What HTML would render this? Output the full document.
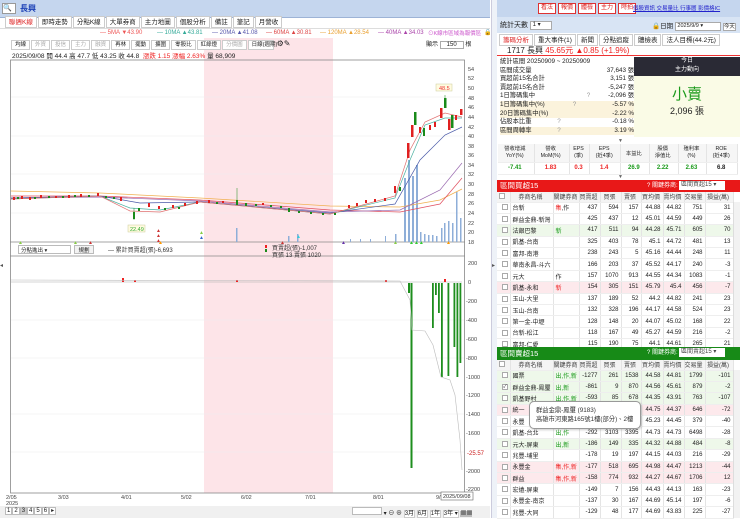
<!DOCTYPE html>
<html><head><meta charset="utf-8">
<style>
*{margin:0;padding:0;box-sizing:border-box}
body{width:740px;height:518px;overflow:hidden;background:#fff;font-family:"Liberation Sans","Noto Sans CJK TC",sans-serif;font-size:7px;color:#222;position:relative}
.a{position:absolute}
.tab{display:inline-block;border:1px solid #ccc;background:#fff;padding:1px 3px;margin-right:1px;font-size:6.5px;height:12px;line-height:9px}
.btn{display:inline-block;border:1px solid #d33;color:#d22;background:#fff;padding:0 2px;font-size:6px;height:11px;line-height:9px;margin-right:2px}
table{border-collapse:collapse;font-size:6px}
td{border-right:1px solid #e4e4e4;border-bottom:1px solid #eee;height:11.4px;text-align:right;padding-right:2px;white-space:nowrap;overflow:hidden}
td.l{text-align:left;padding-left:2px}
tr.h td{background:#f4f4f4;text-align:center;color:#444;height:10px}
.g{background:#eef8ea}.p{background:#fde9ec}
.r{color:#e22}.gr{color:#1a9a1a}
.cb{display:inline-block;width:6px;height:6px;border:1px solid #aaa;background:#fff;vertical-align:middle}
.ma{position:absolute;top:30px;font-size:6px;white-space:nowrap}
</style></head><body>

<div class="a" style="left:0;top:0;width:490px;height:18px;background:#c5d6ee;border-bottom:1px solid #9db3d6"></div>
<div class="a" style="left:2px;top:3px;width:14px;height:11px;background:#fff;border:1px solid #999;font-size:7px;line-height:9px">🔍</div>
<div class="a" style="left:20px;top:3px;font-size:8px;color:#1a3fb5;font-weight:bold">長興</div>

<div class="a" style="left:5px;top:16px;white-space:nowrap">
<span class="tab" style="color:#d22">聯週K線</span><span class="tab">即時走勢</span><span class="tab">分點K線</span><span class="tab">大單券商</span><span class="tab">主力地圖</span><span class="tab">個股分析</span><span class="tab">備註</span><span class="tab">筆記</span><span class="tab">月營收</span>
</div>
<div class="a" style="left:0;top:28px;width:490px;height:1px;background:#ddd"></div>
<span class="ma" style="left:100px;color:#e55">— 5MA ▼43.90</span>
<span class="ma" style="left:157px;color:#3a9">— 10MA ▲43.81</span>
<span class="ma" style="left:212px;color:#55a">— 20MA ▲41.08</span>
<span class="ma" style="left:266px;color:#d44">— 60MA ▲30.81</span>
<span class="ma" style="left:320px;color:#e9a030">— 120MA ▲28.54</span>
<span class="ma" style="left:378px;color:#a4a">— 40MA ▲34.03</span>
<div class="a" style="left:428px;top:29px;font-size:5.5px;color:#c5c;white-space:nowrap">⊙K線市區域為報價區</div>
<div class="a" style="left:484px;top:29px;font-size:6px">🔒</div>

<div class="a" style="left:204px;top:38px;width:129px;height:455px;background:#fde4e8"></div>

<div class="a" style="left:11px;top:39px;white-space:nowrap">
<span class="tab" style="height:10px;font-size:5.5px;line-height:7px">均線</span><span class="tab" style="height:10px;font-size:5.5px;line-height:7px;color:#aaa">外資</span><span class="tab" style="height:10px;font-size:5.5px;line-height:7px;color:#aaa">投信</span><span class="tab" style="height:10px;font-size:5.5px;line-height:7px;color:#aaa">主力</span><span class="tab" style="height:10px;font-size:5.5px;line-height:7px;color:#aaa">融資</span><span class="tab" style="height:10px;font-size:5.5px;line-height:7px">再林</span><span class="tab" style="height:10px;font-size:5.5px;line-height:7px">擺動</span><span class="tab" style="height:10px;font-size:5.5px;line-height:7px">擴圍</span><span class="tab" style="height:10px;font-size:5.5px;line-height:7px">零股比</span><span class="tab" style="height:10px;font-size:5.5px;line-height:7px">紅綠燈</span><span class="tab" style="height:10px;font-size:5.5px;line-height:7px;color:#aaa">分價圖</span><span class="tab" style="height:10px;font-size:5.5px;line-height:7px;width:26px">日線(週期)</span> <span style="font-size:8px">⚙✎</span>
</div>
<div class="a" style="left:12px;top:50px;font-size:6.5px;white-space:nowrap">2025/09/08 開 44.4 高 47.7 低 43.25 收 44.8 &nbsp;<span class="r">漲跌 1.15 漲幅 2.63%</span> 量 68,909</div>
<div class="a" style="left:426px;top:39px;font-size:6px;white-space:nowrap">顯示 <span style="border:1px solid #aaa;padding:0 6px">150</span> 根</div>

<svg class="a" style="left:0;top:0" width="495" height="518">
<g stroke="#888" fill="none" stroke-width="0.8">
<rect x="10.5" y="60" width="454" height="433"/>
<line x1="10" y1="242" x2="465" y2="242"/>
<line x1="10" y1="256" x2="465" y2="256"/>
</g>
<g stroke="#eee" stroke-width="0.6">
<line x1="11" y1="97" x2="464" y2="97"/><line x1="11" y1="136" x2="464" y2="136"/><line x1="11" y1="174" x2="464" y2="174"/><line x1="11" y1="213" x2="464" y2="213"/>
<line x1="11" y1="320" x2="464" y2="320"/><line x1="11" y1="358" x2="464" y2="358"/><line x1="11" y1="414" x2="464" y2="414"/><line x1="11" y1="452" x2="464" y2="452"/>
</g>
<g fill="#444" font-size="5.5" font-family="Liberation Sans">
<text x="468" y="71">54</text><text x="468" y="80">52</text><text x="468" y="90">50</text><text x="468" y="100">48</text><text x="468" y="109">46</text><text x="468" y="119">44</text><text x="468" y="129">42</text><text x="468" y="138">40</text><text x="468" y="148">38</text><text x="468" y="157">36</text><text x="468" y="167">34</text><text x="468" y="176">32</text><text x="468" y="186">30</text><text x="468" y="196">28</text><text x="468" y="205">26</text><text x="468" y="215">24</text><text x="468" y="225">22</text><text x="468" y="234">20</text><text x="468" y="244">18</text>
<text x="468" y="265">200</text><text x="468" y="284">0</text><text x="466" y="303">-200</text><text x="466" y="322">-400</text><text x="466" y="341">-600</text><text x="466" y="360">-800</text><text x="466" y="379">-1000</text><text x="466" y="397">-1200</text><text x="466" y="416">-1400</text><text x="466" y="435">-1600</text><text x="466" y="473">-2000</text><text x="466" y="491">-2200</text>
<text x="467" y="455" fill="#c22" font-size="6">-25.57</text>
<text x="6" y="499">2/05</text><text x="6" y="505">2025</text><text x="58" y="499">3/03</text><text x="121" y="499">4/01</text><text x="181" y="499">5/02</text><text x="241" y="499">6/02</text><text x="305" y="499">7/01</text><text x="373" y="499">8/01</text><text x="436" y="499">9/</text>
</g>
<rect x="441" y="492" width="32" height="8" fill="#fff" stroke="#666" stroke-width="0.6"/>
<text x="443" y="498" font-size="5.5" fill="#333">2025/09/08</text>
<g fill="#8eaed8">
<rect x="236" y="228" width="1.5" height="14"/><rect x="288" y="236" width="1.5" height="6"/><rect x="297" y="234" width="1.5" height="8"/>
<rect x="350" y="239" width="1" height="3"/><rect x="360" y="239" width="1" height="3"/><rect x="370" y="239" width="1" height="3"/><rect x="385" y="236" width="1" height="6"/><rect x="395" y="234" width="1.5" height="8"/>
<rect x="404" y="178" width="2" height="64"/><rect x="408" y="160" width="2" height="82"/><rect x="412" y="176" width="2" height="66"/><rect x="416" y="165" width="2" height="77"/><rect x="420" y="232" width="1.5" height="10"/><rect x="424" y="234" width="1.5" height="8"/><rect x="428" y="235" width="1.5" height="7"/><rect x="432" y="235" width="1.5" height="7"/><rect x="436" y="236" width="1.5" height="6"/><rect x="441" y="228" width="1.5" height="14"/><rect x="444" y="223" width="1.5" height="19"/><rect x="448" y="221" width="1.5" height="21"/><rect x="452" y="223" width="1.5" height="19"/><rect x="456" y="192" width="1.5" height="50"/><rect x="460" y="218" width="1.5" height="24"/>
</g>
<g fill="none" stroke-width="0.7">
<polyline stroke="#f0b050" points="11,191 100,193 200,198 330,206 400,207 440,200 462,189"/>
<polyline stroke="#e05060" points="11,196 100,196 200,200 330,210 400,212 440,204 462,178"/>
<polyline stroke="#9a6ab0" points="11,198 100,197 200,201 330,212 400,210 440,190 462,163"/>
<polyline stroke="#4a5aa8" points="11,198 100,196 140,203 200,202 330,213 395,204 420,160 445,135 462,127"/>
<polyline stroke="#4ab0a0" points="11,199 100,196 130,208 160,210 200,202 330,214 395,198 410,160 425,125 445,118 462,118"/>
<polyline stroke="#e07070" points="11,199 100,196 130,211 160,212 200,202 330,214 395,196 410,150 425,122 445,113 462,117"/>
</g>
<g>
<g fill="#e02020">
<rect x="13" y="197" width="2" height="3"/><rect x="21" y="196" width="2" height="3"/><rect x="29" y="197" width="2" height="3"/><rect x="40" y="195" width="2" height="3"/><rect x="55" y="196" width="2" height="2"/><rect x="68" y="195" width="2" height="3"/><rect x="80" y="194" width="2" height="3"/><rect x="97" y="193" width="2" height="3"/><rect x="120" y="197" width="2" height="4"/>
<rect x="148" y="203" width="2" height="4"/><rect x="158" y="206" width="2" height="3"/><rect x="172" y="205" width="2" height="3"/><rect x="184" y="203" width="2" height="3"/><rect x="196" y="201" width="2" height="3"/><rect x="208" y="200" width="2" height="3"/><rect x="222" y="201" width="2" height="2"/><rect x="262" y="203" width="2" height="2"/>
<rect x="348" y="205" width="2" height="3"/><rect x="356" y="203" width="2" height="3"/><rect x="365" y="200" width="2" height="3"/><rect x="374" y="199" width="2" height="3"/><rect x="384" y="198" width="2" height="3"/><rect x="394" y="186" width="2" height="7"/>
<rect x="407" y="143" width="2.5" height="15"/><rect x="411" y="125" width="2.5" height="12"/><rect x="419" y="127" width="2" height="6"/><rect x="429" y="125" width="2" height="5"/><rect x="434" y="122" width="2" height="5"/><rect x="440" y="108" width="2.5" height="10"/><rect x="448" y="119" width="2.5" height="11"/><rect x="455" y="115" width="2" height="5"/><rect x="460" y="109" width="2.5" height="6"/>
</g>
<g fill="#1a8a1a">
<rect x="17" y="197" width="2" height="2"/><rect x="34" y="197" width="2" height="2"/><rect x="48" y="196" width="2" height="2"/><rect x="62" y="196" width="2" height="2"/><rect x="74" y="195" width="2" height="2"/><rect x="88" y="195" width="2" height="2"/><rect x="105" y="196" width="2" height="2"/><rect x="113" y="197" width="2" height="2"/>
<rect x="133" y="212" width="2" height="7"/><rect x="138" y="208" width="2" height="3"/><rect x="164" y="208" width="2" height="2"/><rect x="178" y="207" width="2" height="2"/><rect x="216" y="202" width="2" height="2"/><rect x="236" y="200" width="2" height="5"/><rect x="245" y="203" width="2" height="3"/><rect x="255" y="204" width="2" height="2"/><rect x="270" y="205" width="2" height="2"/><rect x="280" y="206" width="2" height="2"/><rect x="288" y="208" width="2" height="4"/><rect x="298" y="211" width="2" height="2"/><rect x="310" y="212" width="2" height="2"/><rect x="322" y="213" width="2" height="2"/><rect x="334" y="213" width="2" height="2"/>
<rect x="399" y="187" width="2" height="4"/><rect x="414" y="112" width="2.5" height="13"/><rect x="423" y="128" width="2" height="8"/><rect x="444" y="98" width="2.5" height="10"/><rect x="451" y="115" width="2.5" height="13"/>
</g>
<g stroke="#1a8a1a" stroke-width="0.5"><line x1="237" y1="188" x2="237" y2="200"/><line x1="134" y1="208" x2="134" y2="220"/><line x1="445" y1="95" x2="445" y2="108"/></g>
</g>
<rect x="128" y="225" width="17" height="7" fill="#fffbe0" stroke="#cc9" stroke-width="0.5"/>
<text x="130" y="231" font-size="5.5" fill="#3a3">22.49</text>
<rect x="436" y="84" width="16" height="7" fill="#fffbe0" stroke="#cc9" stroke-width="0.5"/>
<text x="439" y="90" font-size="5.5" fill="#e33">48.5</text>
<g font-size="5">
<text x="18" y="244" fill="#8c4">▲</text><text x="73" y="244" fill="#8c4">▲</text><text x="88" y="244" fill="#c33">▲</text><text x="156" y="242" fill="#c33">▲</text><text x="156" y="237" fill="#c33">▲</text><text x="156" y="232" fill="#c33">▲</text><text x="158" y="244" fill="#f90">▲</text><text x="199" y="239" fill="#36c">▲</text><text x="199" y="234" fill="#8c4">▲</text><text x="280" y="244" fill="#c33">▲</text><text x="296" y="238" fill="#3cd">▲</text><text x="341" y="244" fill="#63a">▲</text><text x="393" y="244" fill="#8c4">▲</text><text x="409" y="244" fill="#3c3">▲▲▲</text><text x="446" y="244" fill="#f90">▲</text>
</g>
<line x1="11" y1="282" x2="462" y2="282" stroke="#aaa" stroke-width="0.6"/>
<g fill="#1e8e1e">
<rect x="408" y="283" width="2" height="10"/><rect x="410.5" y="283" width="2" height="185"/><rect x="432" y="283" width="1.8" height="45"/><rect x="435" y="283" width="1.8" height="12"/><rect x="438" y="283" width="1.8" height="30"/><rect x="441" y="283" width="1.8" height="94"/><rect x="447.5" y="283" width="1.8" height="93"/><rect x="453.5" y="283" width="1.8" height="64"/><rect x="456.5" y="283" width="1.8" height="94"/><rect x="459.5" y="283" width="1.8" height="80"/>
</g>
<g fill="#e22"><rect x="122" y="278" width="2" height="4"/><rect x="134" y="280" width="2" height="2"/><rect x="236" y="280" width="2" height="2"/><rect x="385" y="280" width="2" height="2"/><rect x="444" y="279" width="2" height="3"/></g>
<polyline fill="none" stroke="#bbb" stroke-width="0.6" points="11,280 400,281 410,300 412,330 425,331 433,345 441,377 450,380 455,395 460,440 462,470"/>
<text x="108" y="252" font-size="6" fill="#333">— 累計買賣超(張)-6,693</text>
<rect x="265" y="245" width="2" height="3" fill="#e22"/><rect x="265" y="249" width="2" height="3" fill="#1a8a1a"/>
<text x="272" y="250" font-size="6" fill="#333">買賣超(張)-1,007</text>
<text x="272" y="257" font-size="6" fill="#333">買張 13 賣張 1020</text>
</svg>
<div class="a" style="left:18px;top:245px;width:53px;height:9px;border:1px solid #bbb;background:#fff;font-size:5.5px;padding-left:2px">分點進出 ▾</div>
<div class="a" style="left:74px;top:245px;width:20px;height:9px;border:1px solid #bbb;background:#f3f3f3;font-size:5.5px;text-align:center">規劃</div>
<div class="a" style="left:0;top:506px;width:490px;height:12px;background:#f0f0f0"></div>
<div class="a" style="left:5px;top:507px;font-size:6px;white-space:nowrap">
<span style="border:1px solid #bbb;padding:0 1px;background:#fff">1</span><span style="border:1px solid #bbb;padding:0 1px;background:#fff">2</span><span style="border:1px solid #bbb;padding:0 1px;background:#ccc">3</span><span style="border:1px solid #bbb;padding:0 1px;background:#fff">4</span><span style="border:1px solid #bbb;padding:0 1px;background:#fff">5</span><span style="border:1px solid #bbb;padding:0 1px;background:#fff">6</span><span style="border:1px solid #bbb;padding:0 1px;background:#fff">▸</span></div>
<div class="a" style="left:352px;top:507px;font-size:6px;white-space:nowrap"><span style="display:inline-block;width:30px;height:8px;border:1px solid #bbb;background:#fff"></span> ▾ ⊖ ⊕ <span style="border:1px solid #ccc;background:#fff">3月</span> <span style="border:1px solid #ccc;background:#fff">6月</span> <span style="border:1px solid #ccc;background:#fff">1年</span> <span style="border:1px solid #ccc;background:#fff">3年 ▾</span> <span style="background:#bbb">▦▦</span></div>
<div class="a" style="left:491px;top:0;width:6px;height:518px;background:#eef2f8;border-left:1px solid #ccd"></div>
<div class="a" style="left:0;top:262px;font-size:6px;color:#555">◂</div>
<div class="a" style="left:492px;top:262px;font-size:6px;color:#555">▸</div>

<!-- right panel -->
<div class="a" style="left:497px;top:0;width:243px;height:17px;background:#c5d6ee"></div>
<div class="a" style="left:538px;top:3px;white-space:nowrap"><span class="btn">看法</span><span class="btn">報價</span><span class="btn">體檢</span><span class="btn">主力</span><span class="btn">時拍</span></div>
<div class="a" style="left:633px;top:4px;font-size:5.5px;color:#22c;text-decoration:underline;white-space:nowrap">個股資訊 交易量比 行事曆 影價格IC</div>
<div class="a" style="left:497px;top:17px;width:243px;height:16px;background:#d8e4f4"></div>
<div class="a" style="left:500px;top:20px;font-size:7px;white-space:nowrap">統計天數 <span style="display:inline-block;width:22px;height:9px;border:1px solid #aaa;background:#fff;font-size:6px;vertical-align:middle;line-height:7px">&nbsp;1 ▾</span></div>
<div class="a" style="left:652px;top:20px;font-size:6.5px;white-space:nowrap">🔒日期 <span style="display:inline-block;width:46px;height:9px;border:1px solid #aaa;background:#fff;font-size:5.5px;vertical-align:middle;line-height:7px">&nbsp;2025/9/9 ▾</span><span style="border:1px solid #aaa;background:#fff;font-size:5.5px;margin-left:2px">今天</span></div>
<div class="a" style="left:499px;top:34px;white-space:nowrap"><span class="tab" style="color:#d22">籌碼分析</span><span class="tab">重大事件(1)</span><span class="tab">新聞</span><span class="tab">分點追蹤</span><span class="tab">體檢表</span><span class="tab">法人目標(44.2元)</span></div>
<div class="a" style="left:497px;top:46px;width:243px;height:10px;border-bottom:1px solid #e33"></div>
<div class="a" style="left:507px;top:45px;font-size:8px;white-space:nowrap">1717 長興 <span class="r">45.65元 ▲0.85 (+1.9%)</span></div>
<div class="a" style="left:500px;top:58px;width:134px;font-size:6.3px;line-height:8.6px;white-space:nowrap">
<div>統計區間 20250909 ~ 20250909</div>
<div>區間成交量<span style="float:right">37,643 張</span></div>
<div>買超前15名合計<span style="float:right">3,151 張</span></div>
<div>賣超前15名合計<span style="float:right">-5,247 張</span></div>
<div>1日籌碼集中 <span style="margin-left:50px;color:#999">?</span><span style="float:right">-2,096 張</span></div>
<div style="background:#fbf3dc">1日籌碼集中(%)<span style="margin-left:28px;color:#999">?</span><span style="float:right">-5.57 %</span></div>
<div style="background:#fbf3dc">20日籌碼集中(%)<span style="float:right">-2.22 %</span></div>
<div>佔股本比重 <span style="margin-left:24px;color:#999">?</span><span style="float:right">-0.18 %</span></div>
<div style="background:#fbf3dc">區間周轉率 <span style="margin-left:24px;color:#999">?</span><span style="float:right">3.19 %</span></div>
</div>
<div class="a" style="left:634px;top:57px;width:106px;height:19px;background:#2a2a35;color:#fff;text-align:center;font-size:6px;line-height:9px">今日<br>主力動向</div>
<div class="a" style="left:634px;top:76px;width:106px;height:61px;background:#fafbe6;text-align:center">
<div style="font-size:15px;color:#1a9a1a;margin-top:7px">小賣</div>
<div style="font-size:9px;color:#222">2,096 張</div></div>
<div class="a" style="left:618px;top:138px;font-size:5px;color:#666">▼</div>
<table class="a" style="left:498px;top:144px;width:240px;font-size:5.3px">
<tr><td style="text-align:center;height:18px;background:#f6f6f6;line-height:7px">營收增減<br>YoY(%)</td><td style="text-align:center;background:#f6f6f6;line-height:7px">營收<br>MoM(%)</td><td style="text-align:center;background:#f6f6f6;line-height:7px">EPS<br>(季)</td><td style="text-align:center;background:#f6f6f6;line-height:7px">EPS<br>(近4季)</td><td style="text-align:center;background:#f6f6f6">本益比</td><td style="text-align:center;background:#f6f6f6;line-height:7px">股價<br>淨值比</td><td style="text-align:center;background:#f6f6f6;line-height:7px">殖利率<br>(%)</td><td style="text-align:center;background:#f6f6f6;line-height:7px">ROE<br>(近4季)</td></tr>
<tr style="font-weight:bold;font-size:6px"><td class="gr" style="text-align:center;height:12px">-7.41</td><td class="r" style="text-align:center">1.83</td><td class="r" style="text-align:center">0.3</td><td class="r" style="text-align:center">1.4</td><td class="gr" style="text-align:center">26.9</td><td class="gr" style="text-align:center">2.22</td><td class="gr" style="text-align:center">2.63</td><td style="text-align:center">6.8</td></tr>
</table>
<div class="a" style="left:618px;top:174px;font-size:5px;color:#666">▼</div>

<div class="a" style="left:497px;top:180px;width:243px;height:12px;background:#e81818;color:#fff;font-size:7.5px;padding-left:3px;line-height:12px;white-space:nowrap">區間買超15<span style="position:absolute;left:150px;font-size:6px">? 關鍵券商: <span style="display:inline-block;width:46px;height:9px;background:#fff;color:#444;vertical-align:middle;line-height:9px">&nbsp;區間買超15 ▾</span></span></div>
<table class="a" style="left:497px;top:192px;width:236px;table-layout:fixed">
<colgroup><col style="width:13px"><col style="width:43px"><col style="width:26px"><col style="width:21px"><col style="width:21px"><col style="width:20px"><col style="width:22px"><col style="width:21px"><col style="width:21px"><col style="width:28px"></colgroup>
<tr class="h"><td><span class="cb"></span></td><td>券商名稱</td><td>關鍵券商</td><td>買賣超</td><td>買張</td><td>賣張</td><td>買均價</td><td>賣均價</td><td>交易量</td><td>損益(萬)</td></tr>
<tr><td><span class="cb"></span></td><td class="l">台新</td><td class="l"><span class="r">集</span>,作</td><td>437</td><td>594</td><td>157</td><td>44.88</td><td>44.82</td><td>751</td><td>31</td></tr>
<tr><td><span class="cb"></span></td><td class="l">群益金鼎-新灣</td><td></td><td>425</td><td>437</td><td>12</td><td>45.01</td><td>44.59</td><td>449</td><td>26</td></tr>
<tr class="g"><td><span class="cb"></span></td><td class="l">法銀巴黎</td><td class="l gr">新</td><td>417</td><td>511</td><td>94</td><td>44.28</td><td>45.71</td><td>605</td><td>70</td></tr>
<tr><td><span class="cb"></span></td><td class="l">凱基-台南</td><td></td><td>325</td><td>403</td><td>78</td><td>45.1</td><td>44.72</td><td>481</td><td>13</td></tr>
<tr><td><span class="cb"></span></td><td class="l">富邦-南港</td><td></td><td>238</td><td>243</td><td>5</td><td>45.16</td><td>44.44</td><td>248</td><td>11</td></tr>
<tr><td><span class="cb"></span></td><td class="l">華南永昌-斗六</td><td></td><td>166</td><td>203</td><td>37</td><td>45.52</td><td>44.17</td><td>240</td><td>-3</td></tr>
<tr><td><span class="cb"></span></td><td class="l">元大</td><td class="l">作</td><td>157</td><td>1070</td><td>913</td><td>44.55</td><td>44.34</td><td>1083</td><td>-1</td></tr>
<tr class="p"><td><span class="cb"></span></td><td class="l">凱基-永和</td><td class="l r">新</td><td>154</td><td>305</td><td>151</td><td>45.79</td><td>45.4</td><td>456</td><td>-7</td></tr>
<tr><td><span class="cb"></span></td><td class="l">玉山-大里</td><td></td><td>137</td><td>189</td><td>52</td><td>44.2</td><td>44.82</td><td>241</td><td>23</td></tr>
<tr><td><span class="cb"></span></td><td class="l">玉山-台南</td><td></td><td>132</td><td>328</td><td>196</td><td>44.17</td><td>44.58</td><td>524</td><td>23</td></tr>
<tr><td><span class="cb"></span></td><td class="l">第一金-中壢</td><td></td><td>128</td><td>148</td><td>20</td><td>44.07</td><td>45.02</td><td>168</td><td>22</td></tr>
<tr><td><span class="cb"></span></td><td class="l">台新-松江</td><td></td><td>118</td><td>167</td><td>49</td><td>45.27</td><td>44.59</td><td>216</td><td>-2</td></tr>
<tr><td><span class="cb"></span></td><td class="l">富邦-仁愛</td><td></td><td>115</td><td>190</td><td>75</td><td>44.1</td><td>44.61</td><td>265</td><td>21</td></tr>
</table>
<div class="a" style="left:733px;top:202px;width:7px;height:145px;background:#f2f2f2;border-left:1px solid #ddd"></div>

<div class="a" style="left:497px;top:347px;width:243px;height:13px;background:#178a17;color:#fff;font-size:7.5px;padding-left:3px;line-height:13px;white-space:nowrap">區間賣超15<span style="position:absolute;left:150px;font-size:6px">? 關鍵券商: <span style="display:inline-block;width:46px;height:9px;background:#fff;color:#444;vertical-align:middle;line-height:9px">&nbsp;區間賣超15 ▾</span></span></div>
<table class="a" style="left:497px;top:360px;width:236px;table-layout:fixed">
<colgroup><col style="width:13px"><col style="width:43px"><col style="width:26px"><col style="width:21px"><col style="width:21px"><col style="width:20px"><col style="width:22px"><col style="width:21px"><col style="width:21px"><col style="width:28px"></colgroup>
<tr class="h"><td><span class="cb"></span></td><td>券商名稱</td><td>關鍵券商</td><td>買賣超</td><td>買張</td><td>賣張</td><td>買均價</td><td>賣均價</td><td>交易量</td><td>損益(萬)</td></tr>
<tr class="g"><td><span class="cb"></span></td><td class="l">國票</td><td class="l gr">出,作,新</td><td>-1277</td><td>261</td><td>1538</td><td>44.58</td><td>44.81</td><td>1799</td><td>-101</td></tr>
<tr class="g"><td><span class="cb" style="font-size:5px;line-height:4px">✓</span></td><td class="l">群益金鼎-鳳璽</td><td class="l gr">出,新</td><td>-861</td><td>9</td><td>870</td><td>44.56</td><td>45.61</td><td>879</td><td>-2</td></tr>
<tr class="g"><td><span class="cb"></span></td><td class="l">凱基野村</td><td class="l gr">出,作,新</td><td>-593</td><td>85</td><td>678</td><td>44.35</td><td>43.91</td><td>763</td><td>-107</td></tr>
<tr class="p"><td><span class="cb"></span></td><td class="l">統一</td><td></td><td>-549</td><td>97</td><td>646</td><td>44.75</td><td>44.37</td><td>646</td><td>-72</td></tr>
<tr><td><span class="cb"></span></td><td class="l">永豐</td><td></td><td>-355</td><td>12</td><td>367</td><td>45.23</td><td>44.45</td><td>379</td><td>-40</td></tr>
<tr><td><span class="cb"></span></td><td class="l">凱基-台北</td><td class="l gr">出,作</td><td>-292</td><td>3103</td><td>3395</td><td>44.73</td><td>44.73</td><td>6498</td><td>-28</td></tr>
<tr class="g"><td><span class="cb"></span></td><td class="l">元大-屏東</td><td class="l gr">出,新</td><td>-186</td><td>149</td><td>335</td><td>44.32</td><td>44.88</td><td>484</td><td>-8</td></tr>
<tr><td><span class="cb"></span></td><td class="l">兆豐-埔里</td><td></td><td>-178</td><td>19</td><td>197</td><td>44.15</td><td>44.03</td><td>216</td><td>-29</td></tr>
<tr class="p"><td><span class="cb"></span></td><td class="l">永豐金</td><td class="l r">集,作,新</td><td>-177</td><td>518</td><td>695</td><td>44.98</td><td>44.47</td><td>1213</td><td>-44</td></tr>
<tr class="p"><td><span class="cb"></span></td><td class="l">群益</td><td class="l r">集,作,新</td><td>-158</td><td>774</td><td>932</td><td>44.27</td><td>44.67</td><td>1706</td><td>12</td></tr>
<tr><td><span class="cb"></span></td><td class="l">宏遠-屏東</td><td></td><td>-149</td><td>7</td><td>156</td><td>44.43</td><td>44.13</td><td>163</td><td>-23</td></tr>
<tr><td><span class="cb"></span></td><td class="l">永豐金-南京</td><td></td><td>-137</td><td>30</td><td>167</td><td>44.69</td><td>45.14</td><td>197</td><td>-6</td></tr>
<tr><td><span class="cb"></span></td><td class="l">兆豐-大同</td><td></td><td>-129</td><td>48</td><td>177</td><td>44.69</td><td>43.83</td><td>225</td><td>-27</td></tr>
</table>
<div class="a" style="left:733px;top:370px;width:7px;height:148px;background:#f2f2f2;border-left:1px solid #ddd"></div>

<div class="a" style="left:529px;top:401px;width:112px;height:28px;background:#fff;border:1px solid #999;border-radius:5px;font-size:6.3px;line-height:9px;padding:4px 6px;white-space:nowrap;color:#333;box-shadow:1px 1px 2px rgba(0,0,0,.2)">群益金鼎-鳳璽 (9183)<br>高雄市河東路165號1樓(部分)、2樓</div>
</body></html>
